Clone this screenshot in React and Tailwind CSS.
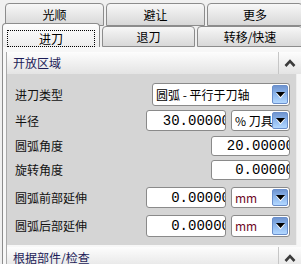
import React from "react";

const Chevron = () => (
  <svg width="12" height="8" viewBox="0 0 12 8">
    <polyline points="1.5,7 6,2.2 10.5,7" fill="none" stroke="#3c3c3c" strokeWidth="2.6" />
  </svg>
);

const DropBtn = () => (
  <div className="w-[16px] self-stretch my-[1px] mr-[1px] rounded-[2px] bg-gradient-to-b from-[#6f94cf] via-[#8fb8ee] to-[#b3d8ff] border border-[#6a8fcc] flex items-center justify-center">
    <svg width="11" height="8" viewBox="0 0 11 8">
      <polygon points="1,2 10,2 5.5,7.5" fill="#ffffff" />
      <polygon points="1,1 10,1 5.5,6" fill="#000000" />
    </svg>
  </div>
);

function Select({ w, h, text, red }) {
  return (
    <div className={`${w} ${h} flex bg-white border border-[#8a8a8a] rounded-[3px] overflow-hidden`}>
      <div className={`flex-1 flex items-center pl-[3px] text-[12px] leading-none whitespace-nowrap overflow-hidden ${red ? "text-[#6e0a24]" : "text-black"}`}>
        {text}
      </div>
      <DropBtn />
    </div>
  );
}

function Num({ w, h, text }) {
  return (
    <div className={`${w} ${h} flex bg-white border border-[#8a8a8a] rounded-[3px] overflow-hidden justify-end items-center`}>
      <span className="-mr-[5px] font-['Liberation_Mono',monospace] text-[14px] leading-none text-black whitespace-nowrap">
        {text}
      </span>
    </div>
  );
}

function Tab({ w, h, label, selected, extra }) {
  return (
    <div
      className={`${w} ${h} shrink-0 rounded-t-[4px] border border-[#8c8c8c] flex ${
        selected
          ? "border-b-0 bg-gradient-to-b from-[#fdfdfd] to-[#ececec] flex-col"
          : "bg-gradient-to-b from-[#f7f7f7] to-[#d8d8d8] items-center justify-center"
      } ${extra || ""}`}
    >
      {selected ? (
        <div className="mx-[4px] mt-[6px] mb-[0px] flex-1 border border-dotted border-black flex items-center justify-center text-[12px] leading-none">
          {label}
        </div>
      ) : (
        <span className="text-[12px] leading-none">{label}</span>
      )}
    </div>
  );
}

function Row({ label, mt, h, children }) {
  return (
    <div className={`flex items-center ${mt} ${h} pr-[6px]`}>
      <span className="pl-[8px] text-[12px] leading-none text-[#111]">{label}</span>
      <div className="ml-auto flex gap-[5px]">{children}</div>
    </div>
  );
}

function Header({ label }) {
  return (
    <div className="h-[22px] shrink-0 flex items-stretch bg-gradient-to-b from-[#fdfdfd] to-[#e4e4e4]">
      <div className="flex items-center pl-[6px] text-[12px] leading-none text-[#1c1c58]">{label}</div>
      <div className="ml-auto w-[23px] border-l border-[#c6c6c6] flex items-center justify-center">
        <Chevron />
      </div>
    </div>
  );
}

export default function App() {
  return (
    <div className="w-[301px] h-[264px] overflow-hidden bg-[#f0f0f0] flex flex-col font-['Noto_Sans_CJK_SC',sans-serif] text-black">
      <div className="flex pl-[5px] pt-[3px] gap-[2px] shrink-0">
        <Tab w="w-[99px]" h="h-[23px]" label="光顺" />
        <Tab w="w-[99px]" h="h-[23px]" label="避让" />
        <Tab w="w-[96px]" h="h-[23px]" label="更多" />
      </div>
      <div className="relative z-10 flex items-end h-[24px] -mt-[3px] pl-[2px] gap-[2px] shrink-0">
        <Tab w="w-[98px]" h="h-[24px]" label="进刀" selected />
        <Tab w="w-[93px]" h="h-[21px]" label="退刀" />
        <Tab w="w-[106px]" h="h-[21px]" label="转移/快速" />
      </div>
      <div className="flex-1 ml-[2px] border-l border-[#8c8c8c] bg-[#f7f7f7] pt-[5px] pl-[3px] flex flex-col min-h-0">
        <div className="flex-1 border-l border-[#a9a9a9] flex flex-col min-h-0">
          <Header label="开放区域" />
          <div className="mr-[4px] bg-[#d5d5d5] border-r border-[#eeeeee] pt-[9px] pb-[8px] flex flex-col shrink-0">
            <Row label="进刀类型" mt="" h="h-[23px]">
              <Select w="w-[138px]" h="h-[23px]" text="圆弧 - 平行于刀轴" />
            </Row>
            <Row label="半径" mt="mt-[4px]" h="h-[21px]">
              <Num w="w-[80px]" h="h-[21px]" text="30.00000" />
              <Select w="w-[59px]" h="h-[21px]" text="% 刀具" />
            </Row>
            <Row label="圆弧角度" mt="mt-[5px]" h="h-[20px]">
              <Num w="w-[79px]" h="h-[20px]" text="20.00000" />
            </Row>
            <Row label="旋转角度" mt="mt-[4px]" h="h-[20px]">
              <Num w="w-[79px]" h="h-[20px]" text="0.00000" />
            </Row>
            <Row label="圆弧前部延伸" mt="mt-[7px]" h="h-[21px]">
              <Num w="w-[80px]" h="h-[21px]" text="0.00000" />
              <Select w="w-[59px]" h="h-[21px]" text="mm" red />
            </Row>
            <Row label="圆弧后部延伸" mt="mt-[7px]" h="h-[22px]">
              <Num w="w-[80px]" h="h-[22px]" text="0.00000" />
              <Select w="w-[59px]" h="h-[22px]" text="mm" red />
            </Row>
          </div>
          <div className="h-[2px] shrink-0" />
          <Header label="根据部件/检查" />
        </div>
      </div>
    </div>
  );
}
